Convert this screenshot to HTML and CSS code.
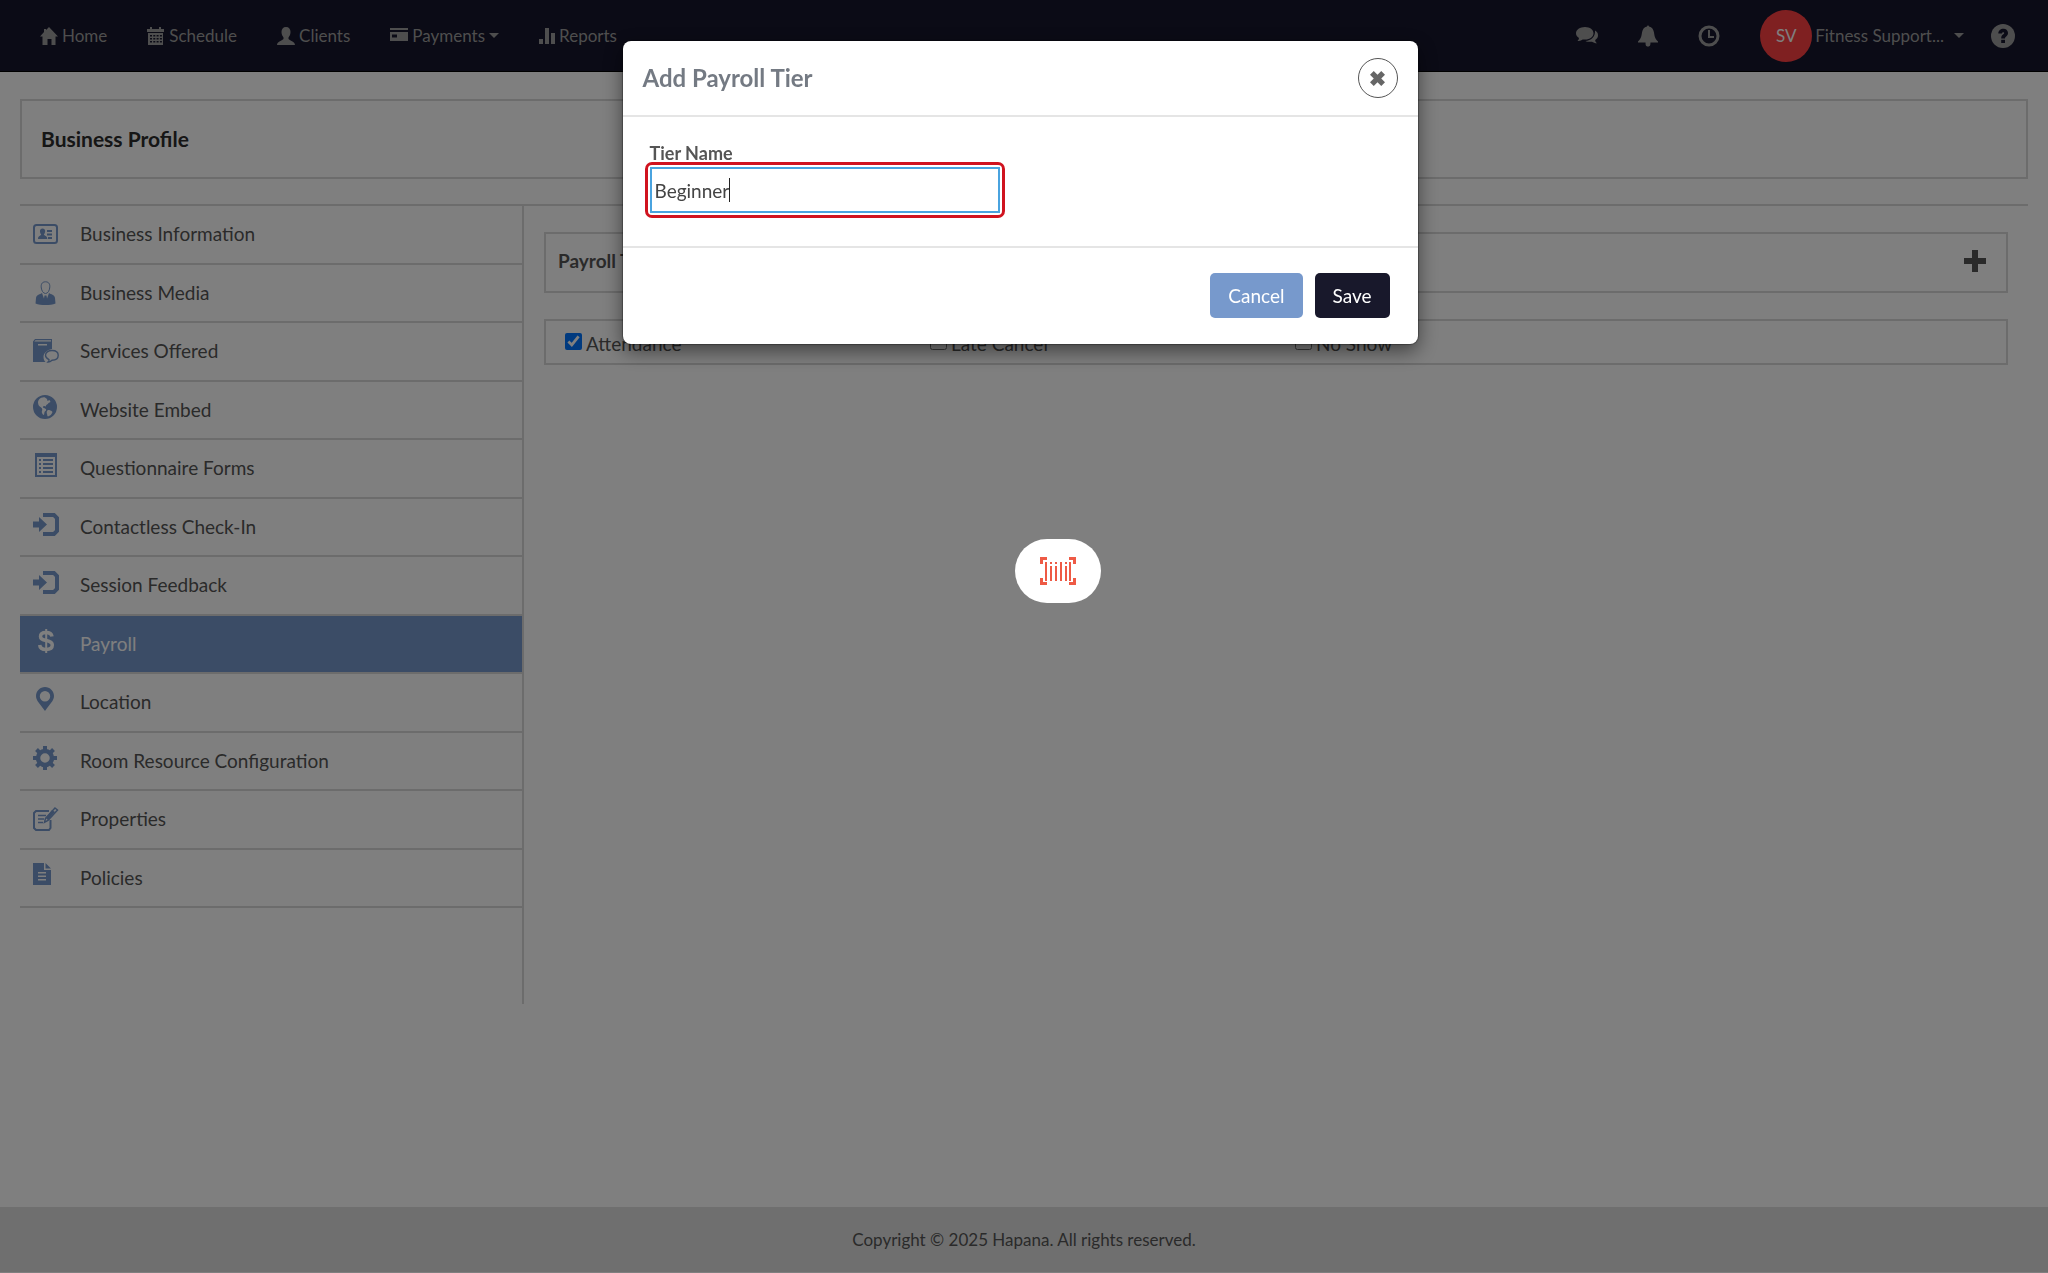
FILE: index.html
```html
<!DOCTYPE html>
<html lang="en">
<head>
    <meta charset="UTF-8">
    <meta name="viewport" content="width=device-width, initial-scale=1.0">
    <title>Business Profile</title>
    <link rel="stylesheet" href="styles.css">
</head>
<body>
<nav class="navbar">
    <div class="nav-left">
        <a href="#"><svg width="18" height="18" viewBox="0 0 18 18"><path d="M9 0l9 9.500h-2.500V18h-4v-6h-4v6H2.500V9.500H0L4 5V2h2v1z"/></svg>Home</a>
        <a href="#" class="wide"><svg width="17" height="18" viewBox="0 0 17 18"><path fill-rule="evenodd" d="M0 2h3V0h2v2h7V0h2v2h3v3H0zM1 6h15v12H1zM3 8v1.500h2V8zM6.300 8v1.500h2V8zM9.600 8v1.500h2V8zM12.900 8v1.500h2V8zM3 11v1.500h2V11zM6.300 11v1.500h2V11zM9.600 11v1.500h2V11zM12.900 11v1.500h2V11zM3 14v1.500h2V14zM6.300 14v1.500h2V14zM9.600 14v1.500h2V14zM12.900 14v1.500h2V14z"/></svg>Schedule</a>
        <a href="#"><svg width="18" height="18" viewBox="0 0 18 18"><path d="M9 0c3 0 4.500 2 4.500 5 0 2.500-1 4-2 5.500v1.500c1 1.500 6.500 2.500 6.500 6H0c0-3.500 5.500-4.500 6.500-6v-1.500C5.500 9 4.500 7.500 4.500 5c0-3 1.500-5 4.500-5z"/></svg>Clients</a>
        <a href="#"><svg width="18" height="18" viewBox="0 0 18 18"><path fill-rule="evenodd" d="M0 1h18v2H0zM0 5h18v9H0zM2 7.500v3h5v-3z"/></svg>Payments<span class="caret"></span></a>
        <a href="#"><svg width="16" height="18" viewBox="0 0 16 18"><path d="M0 12h4v5H0zM6 1h4v16H6zM12 6h4v11h-4z"/></svg>Reports</a>
    </div>
    <div class="nav-right">
        <a href="#" aria-label="Messages"><svg width="22" height="18" viewBox="0 0 22 18"><path d="M9 0c5 0 8.500 2.800 8.500 6.300S14 12.600 9 12.600c-.8 0-1.500 0-2.300-.2C5 13.600 3 14 1.500 14c1-1 1.500-2 1.500-3C1.200 10 0 8.200 0 6.300 0 2.800 4 0 9 0z"/><path d="M19 3.500c2 1.200 3 2.800 3 4.700 0 2-1 3.500-2.800 4.700 0 1.200.5 2.300 1.800 3.300-2 0-3.800-.6-5-1.500-2.500.4-5 0-6.500-.8 5.500-.2 10-4 9.500-10.400z"/></svg></a>
        <a href="#" aria-label="Notifications"><svg width="20" height="22" viewBox="0 0 20 22"><path d="M9 1.500C9 0 11 0 11 1.500c3 .6 4.500 3 5 6 .6 4 1 6.500 4 9v1h-7.500c-.2 1.500.3 4-2.500 4s-2.300-2.500-2.500-4H0v-1c3-2.500 3.400-5 4-9 .5-3 2-5.400 5-6z"/></svg></a>
        <a href="#" aria-label="History"><svg width="22" height="22" viewBox="0 0 22 22"><path fill="none" stroke="currentColor" stroke-width="3" d="M11 2a9 9 0 1 0 0 18a9 9 0 0 0 0-18z"/><path fill="none" stroke="currentColor" stroke-width="2" d="M11 5v7h5"/></svg></a>
        <a href="#" class="user"><span class="avatar">SV</span>Fitness Support...<span class="caret"></span></a>
        <a href="#" aria-label="Help"><svg width="24" height="24" viewBox="0 0 24 24"><circle cx="12" cy="12" r="12"/><path class="cut" d="M7.300 9.500C7.300 3 17 3.200 17 9c0 3.300-3 3.300-3 5.500h-3.800c0-4.200 3-3.900 3-5.400 0-1.300-2.100-1.400-2.200.4z"/><path class="cut" d="M10.200 15.800h3.800V19h-3.800z"/></svg></a>
    </div>
</nav>

<main class="page">
    <header class="page-title"><h1>Business Profile</h1></header>
    <div class="profile">
        <aside class="sidebar">
            <ul class="menu">
                <li><a href="#"><svg viewBox="0 0 26 24"><rect x="1" y="3" width="23" height="18" rx="2.500" fill="none" stroke="currentColor" stroke-width="2"/><path d="M9.500 6.500c3.500 0 3.200 4.300 1.400 6 .4 1.500 3.400 1 3.400 4.500H5c0-3.500 2.800-3 3.200-4.500-1.600-1.700-2-6 1.300-6zM14 8h5v2h-5zM14 11.500h5v2h-5zM15 15h4v2h-4z"/></svg>Business Information</a></li>
                <li><a href="#"><svg viewBox="0 0 26 24"><path fill="none" stroke="currentColor" d="M12.500.8c4 0 4.700 3.200 4.200 6.200-.4 2.500-1.700 5.500-4.200 5.500S8.700 9.500 8.300 7C7.800 4 8.500.8 12.500.8z"/><path fill-rule="evenodd" d="M9 12l3.500 10L16 12c2 1.600 5.500 1.500 6 5l.5 5.500c-5 2-15 2-20 0L3 17c.5-3.500 4-3.400 6-5z"/><path d="M11.500 14.500h2l1 6-2 2.500-2-2.500z"/></svg>Business Media</a></li>
                <li><a href="#"><svg viewBox="0 0 26 24"><path fill-rule="evenodd" d="M2 0h17v10c-5 1-8.500 4-8.500 8 0 2.200.8 4 2 5H0V2.500zM5 5v1.500h9V5zM2.500 1.200L1.300 2.600H18V1.200z"/><path fill="none" stroke="currentColor" stroke-width="1.400" d="M19 11.500c4 0 6.200 2 6.200 4.800s-2.200 5-6.200 5c-1.300 1.300-2.700 1.800-4 1.800.9-.9 1.200-1.600 1-2.500-2.200-1-3.500-2.500-3.500-4.300 0-2.800 2.700-4.800 6.500-4.800z"/></svg>Services Offered</a></li>
                <li><a href="#" class="raised"><svg viewBox="0 0 26 24"><path fill-rule="evenodd" d="M12 0a12 12 0 1 1 0 24a12 12 0 0 1 0-24zM6 4.500c-1.500 2-1 3.500-.5 5.500.7 1.700 2.600 1.800 3.500 3.500 1 1.800-.8 2.800 0 4.500.6 1 1.200 2 1.800 2 .8-1 .2-2.200 1-3.500.8-1 2-1 1-2.500-.8-1-2.800-.8-3-2 .6-1.500 2-1 3-.5 0-2 2.200-2 2.700-3.500l2-1-1-2-2 1-.5-2-2-1.500C10 2 7.500 3 6 4.500zM15 15c-1.500 1-1.500 2.500-1 4 .5 1 0 2 1 2.500 2-.6 3.800-2.200 4.500-4.500-1-1.500-3-2-4.500-2z"/></svg>Website Embed</a></li>
                <li><a href="#" class="raised"><svg viewBox="0 0 26 24"><path fill-rule="evenodd" d="M2 0h22v24H2zM4 4v18h18V4z"/><path d="M6 6h2v2H6zM6 10h2v2H6zM6 14h2v2H6zM6 18h2v2H6zM10 6h10v2H10zM10 10h10v2H10zM10 14h10v2H10zM10 18h10v2H10z"/></svg>Questionnaire Forms</a></li>
                <li><a href="#" class="raised"><svg viewBox="0 0 26 24"><path d="M0 9.500h6V5l8 7.500L6 20v-4.500H0z"/><path fill="none" stroke="currentColor" stroke-width="4" d="M10 3h11l3 3v13l-3 3H10"/></svg>Contactless Check-In</a></li>
                <li><a href="#" class="raised"><svg viewBox="0 0 26 24"><path d="M0 9.500h6V5l8 7.500L6 20v-4.500H0z"/><path fill="none" stroke="currentColor" stroke-width="4" d="M10 3h11l3 3v13l-3 3H10"/></svg>Session Feedback</a></li>
                <li class="active"><a href="#" class="raised"><svg viewBox="0 0 26 24"><path fill="none" stroke="currentColor" stroke-width="3.500" d="M19 7.500C18.500 4.500 16 3.500 13 3.500c-3.500 0-5.500 1.500-5.500 4C7.500 13.500 19.300 9.500 19.300 16c0 3-2.600 4.500-6.300 4.500-3.500 0-6-1.500-6.300-4.500"/><path d="M12.200 0h2v24h-2z"/></svg>Payroll</a></li>
                <li><a href="#" class="raised"><svg viewBox="0 0 26 24"><path fill-rule="evenodd" d="M12 0c5 0 9 4 9 9 0 4.500-4 8-9 15C7 17 3 13.500 3 9c0-5 4-9 9-9zM12 4a5.200 5.200 0 1 0 0 10.400A5.200 5.200 0 0 0 12 4z"/></svg>Location</a></li>
                <li><a href="#" class="raised"><svg viewBox="0 0 26 24"><circle cx="12" cy="12" r="7" fill="none" stroke="currentColor" stroke-width="4.500"/><path fill="none" stroke="currentColor" stroke-width="4" d="M12 0v5M12 19v5M0 12h5M19 12h5M3.500 3.500l3.500 3.500M17 17l3.500 3.500M20.500 3.500L17 7M7 17l-3.500 3.500"/></svg>Room Resource Configuration</a></li>
                <li><a href="#"><svg viewBox="0 0 26 24"><path fill="none" stroke="currentColor" stroke-width="2" d="M16 4H3L1 6v15l2 2h13l1.500-2v-8"/><path fill="none" stroke="currentColor" stroke-width="1.500" d="M5 8.500h8M5 12h6M5 15.500h5"/><path fill="none" stroke="currentColor" stroke-width="1.500" d="M22 1l2.500 2L15 13.500l-3.500 1.800 1-4z"/><path d="M19 3l3 2-7 8-2-1.500z"/></svg>Properties</a></li>
                <li><a href="#" class="raised"><svg viewBox="0 0 26 24"><path fill-rule="evenodd" d="M0 0h11v7h7v15H0zM12.500 0L18 5.500h-5.500zM5 9v1.500h8V9zM5 12.500V14h8v-1.500zM5 16v1.500h8V16z"/></svg>Policies</a></li>
            </ul>
        </aside>
        <section class="content">
            <div class="panel panel-heading">
                <h2>Payroll Tiers</h2>
                <button class="add" aria-label="Add payroll tier"><svg width="22" height="22" viewBox="0 0 22 22"><path d="M8 0h6v8h8v6h-8v8H8v-8H0V8h8z"/></svg></button>
            </div>
            <div class="panel checks">
                <label><input type="checkbox" checked>Attendance</label>
                <label><input type="checkbox">Late Cancel</label>
                <label><input type="checkbox">No Show</label>
            </div>
        </section>
    </div>
</main>

<footer class="footer">Copyright © 2025 Hapana. All rights reserved.</footer>

<div class="backdrop">
    <form class="modal" role="dialog" aria-labelledby="modal-title">
        <div class="modal-header">
            <h2 id="modal-title">Add Payroll Tier</h2>
            <button type="button" class="close" aria-label="Close"><svg width="15" height="15" viewBox="0 0 16 16"><path d="M4 0l4 4 4-4 4 4-4 4 4 4-4 4-4-4-4 4-4-4 4-4-4-4z"/></svg></button>
        </div>
        <div class="modal-body">
            <label for="tier-name">Tier Name</label>
            <div class="highlight">
                <input id="tier-name" type="text" value="Beginner">
                <span class="text-cursor"></span>
            </div>
        </div>
        <div class="modal-footer">
            <button type="button" class="btn btn-cancel">Cancel</button>
            <button type="submit" class="btn btn-save">Save</button>
        </div>
    </form>
</div>

<button class="scanner" aria-label="Scan barcode"><svg width="36" height="28" viewBox="0 0 36 28"><path fill="none" stroke="currentColor" stroke-width="3" d="M1.500 7V1.500H7M29 1.500h5.500V7M34.500 21v5.500H29M7 26.500H1.500V21"/><path d="M5 5h2v19H5zM10 9h2v15h-2zM10 5h2v2h-2zM15 9h2v15h-2zM15 5h2v2h-2zM20 5h2v19h-2zM25 9h2v15h-2zM25 5h2v2h-2zM29 5h2v19h-2z"/></svg></button>
</body>
</html>
```
FILE: styles.css
```css
* {
    box-sizing: border-box;
}

body {
    display: flex;
    flex-direction: column;
    min-height: 100vh;
    margin: 0;
    color: #555;
    background: #fff;
    font: 19px/24px Lato, "Open Sans", sans-serif;
}

a {
    color: inherit;
    text-decoration: none;
}

h1, h2 {
    margin: 0;
}

svg {
    display: block;
    flex: none;
    fill: currentColor;
}

button, input {
    font: inherit;
}

/* top bar */
.navbar {
    display: flex;
    justify-content: space-between;
    height: 72px;
    padding: 0 33px 0 40px;
    color: #9d9d9d;
    background: #16162c;
    border-bottom: 1px solid #000;
    font-size: 17px;
}

.nav-left, .nav-right, .navbar a {
    display: flex;
    align-items: center;
}

.nav-left {
    gap: 40px;
}

.nav-left a {
    gap: 4px;
}

.nav-left a.wide {
    gap: 5px;
}

.nav-right {
    gap: 40px;
}

.nav-right .user {
    gap: 3px;
    margin-right: -13px;
}

.avatar {
    width: 52px;
    height: 52px;
    border-radius: 50%;
    color: #fff;
    background: #ff4043;
    line-height: 52px;
    text-align: center;
}

.caret {
    flex: none;
    border: 5px solid transparent;
    border-top-color: currentColor;
    border-bottom: 0;
}

.user .caret {
    margin-left: 7px;
}

.cut {
    fill: #16162c;
}

/* page */
.page {
    flex: 1;
    padding: 27px 20px;
}

.page-title {
    padding: 26px 19px;
    border: 2px solid #d8d8d8;
    margin-bottom: 25px;
}

.page-title h1 {
    color: #2c2c2c;
    font-size: 21px;
    line-height: 24px;
}

.profile {
    display: flex;
    border-top: 2px solid #d8d8d8;
}

.sidebar {
    flex: none;
    width: 504px;
    min-height: 798px;
    border-right: 2px solid #d8d8d8;
}

.menu {
    display: grid;
    grid-auto-rows: 1fr;
    min-height: 702px;
    padding: 0;
    margin: 0;
    list-style: none;
}

.menu li {
    border-bottom: 2px solid #d8d8d8;
}

.menu a {
    display: flex;
    align-items: center;
    gap: 21px;
    height: 100%;
    padding-left: 13px;
}

.menu svg {
    width: 26px;
    height: 24px;
    color: #7799cc;
}

.menu .raised svg {
    margin-bottom: 6px;
}

.menu .active {
    color: #fff;
    background: #7799cc;
}

.menu .active svg {
    color: #fff;
}

.content {
    flex: 1;
    padding: 26px 20px;
}

.panel {
    border: 2px solid #d8d8d8;
}

.panel-heading {
    display: flex;
    align-items: center;
    justify-content: space-between;
    height: 61px;
    padding: 0 20px 4px 12px;
    margin-bottom: 26px;
}

.panel-heading h2 {
    font-size: 19px;
}

.add {
    padding: 0;
    border: 0;
    color: #555;
    background: none;
}

.checks {
    display: grid;
    grid-template-columns: repeat(4, 1fr);
    height: 46px;
}

.checks label {
    display: flex;
    align-items: center;
    gap: 4px;
    padding: 3px 0 0 19px;
}

.checks input {
    width: 17px;
    height: 17px;
    margin: 0 0 5px;
}

.footer {
    padding: 20px;
    border-bottom: 1px solid #fff;
    background: #dedede;
    font-size: 17px;
    line-height: 25px;
    text-align: center;
}

/* dialog */
.backdrop {
    position: fixed;
    inset: 0;
    padding: 41px 8px 0 0;
    background: rgba(0, 0, 0, 0.5);
}

.modal {
    width: 795px;
    max-width: 100%;
    margin: 0 auto;
    border-radius: 8px;
    background: #fff;
    box-shadow: 0 7px 20px rgba(0, 0, 0, 0.5), 0 0 1px 1px rgba(0, 0, 0, 0.3);
}

.modal-header {
    display: flex;
    align-items: center;
    justify-content: space-between;
    padding: 17px 20px;
    border-bottom: 2px solid #e5e5e5;
}

.modal-header h2 {
    color: #747a83;
    font-size: 24px;
    line-height: 32px;
}

.close {
    display: flex;
    align-items: center;
    justify-content: center;
    width: 40px;
    height: 40px;
    padding: 0;
    border: 1px solid #555;
    border-radius: 50%;
    color: #666;
    background: #fff;
}

.modal-body {
    padding: 28px 22px;
}

.modal-body label {
    display: block;
    padding-left: 5px;
    font-size: 18px;
    font-weight: bold;
    line-height: 17px;
}

.highlight {
    position: relative;
    width: 360px;
    padding: 2px;
    border: 3px solid #d0131f;
    border-radius: 7px;
}

.highlight input {
    display: block;
    width: 100%;
    height: 46px;
    padding: 0 3px;
    border: 2px solid #4aa3df;
    outline: 0;
    color: #444;
}

.text-cursor {
    position: absolute;
    top: 13px;
    left: 81px;
    width: 1px;
    height: 24px;
    background: #222;
}

.modal-footer {
    display: flex;
    justify-content: flex-end;
    gap: 12px;
    padding: 25px 28px 26px;
    border-top: 2px solid #e5e5e5;
}

.btn {
    padding: 0 18px;
    border: 0;
    border-radius: 5px;
    color: #fff;
    line-height: 45px;
}

.btn-cancel {
    background: #7799cc;
}

.btn-save {
    background: #18182b;
}

/* floating scanner shortcut */
.scanner {
    position: fixed;
    top: 539px;
    left: 1015px;
    display: flex;
    align-items: center;
    justify-content: center;
    width: 86px;
    height: 64px;
    border: 0;
    border-radius: 32px;
    color: #ee5a45;
    background: #fff;
}
```
